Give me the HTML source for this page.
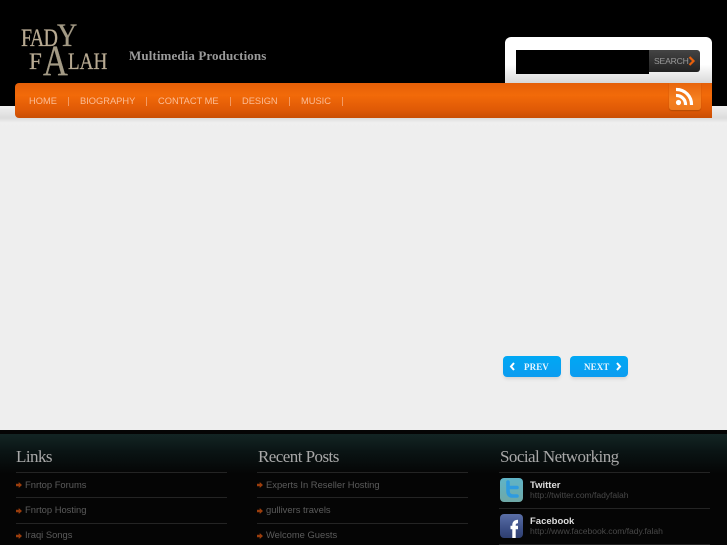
<!DOCTYPE html>
<html><head><meta charset="utf-8"><style>
html,body{margin:0;padding:0}
body{width:727px;height:545px;overflow:hidden;position:relative;background:#eeeeee;font-family:"Liberation Sans",sans-serif}
div,span,a{position:absolute;white-space:nowrap}
.nav{font-size:9.3px;color:#fbbd97;top:95px;line-height:12px}
.sep{width:1px;height:9px;background:#f39a63;top:97px}
.h{font-family:"Liberation Serif",serif;font-size:17px;color:#a8a8a8;top:447px;line-height:20px;letter-spacing:-.55px}
.ln{height:1px;background:#242424;width:211px}
.it{font-size:9.4px;color:#5c5c5c;line-height:12px;letter-spacing:0}
.ar{width:6px;height:6px;background:#9a3d0c;clip-path:polygon(0 30%,45% 30%,45% 0,100% 50%,45% 100%,45% 70%,0 70%)}
.url{font-size:8.6px;color:#484848;line-height:12px;letter-spacing:-.05px}
.tt{font-size:9.5px;font-weight:bold;line-height:12px;color:#ddd;letter-spacing:0}
.btn{top:356px;width:58px;height:21px;border-radius:4px;background:linear-gradient(#00a8f4,#0c9cf0);box-shadow:0 3px 3px -1px #d4d4d4}
.bt{font-family:"Liberation Serif",serif;font-weight:bold;font-size:9px;letter-spacing:.1px;color:#e8f6ff;line-height:12px}
.lg{font-family:"Liberation Serif",serif;transform-origin:left;-webkit-text-stroke:.3px currentColor}
</style></head><body>
<div style="left:0;top:0;width:727px;height:106px;background:#000"></div>
<div style="left:0;top:106px;width:727px;height:24px;background:linear-gradient(#f0f0f0,#dcdcdc 50%,#efefef 70%,#eee)"></div>

<span class="lg" style="left:21px;top:26px;font-size:25px;line-height:26px;color:#b8aa92;letter-spacing:-1px;transform:scaleX(.8)">FAD</span>
<span class="lg" style="left:57px;top:18px;font-size:33px;line-height:36px;color:#a39a85;transform:scaleX(.85)">Y</span>
<span class="lg" style="left:29px;top:49px;font-size:23px;line-height:26px;color:#b8aa92">F</span>
<span class="lg" style="left:43px;top:44px;font-size:43px;line-height:36px;color:#a39a85;transform:scaleX(.8)">A</span>
<span class="lg" style="left:68px;top:49px;font-size:23px;line-height:26px;color:#b8aa92;transform:scaleX(.83)">LAH</span>
<span style="left:129px;top:48px;font-family:'Liberation Serif',serif;font-weight:bold;font-size:13px;line-height:16px;color:#9a9a9a;letter-spacing:.1px">Multimedia Productions</span>

<div style="left:505px;top:37px;width:207px;height:46px;border-radius:6px 6px 0 0;background:linear-gradient(#fff,#fff 60%,#d8d8d8)"></div>
<div style="left:516px;top:50px;width:133px;height:24px;background:#000"></div>
<div style="left:649px;top:50px;width:51px;height:22px;border-radius:0 3px 3px 0;background:linear-gradient(#444,#222)"></div>
<span style="left:654px;top:55px;font-size:8.6px;line-height:12px;color:#999;letter-spacing:-.2px">SEARCH</span>
<svg style="position:absolute;left:688px;top:56px" width="8" height="10"><path d="M1.5 1L5.5 5L1.5 9" fill="none" stroke="#e8600c" stroke-width="2.2"/></svg>

<div style="left:15px;top:83px;width:697px;height:35px;border-radius:4px 0 0 4px;background:linear-gradient(#e45f08,#f26a09 35%,#e05a06 75%,#c94e04)"></div>
<span class="nav" style="left:29px">HOME</span><div class="sep" style="left:68px"></div>
<span class="nav" style="left:80px">BIOGRAPHY</span><div class="sep" style="left:146px"></div>
<span class="nav" style="left:158px">CONTACT ME</span><div class="sep" style="left:230px"></div>
<span class="nav" style="left:242px">DESIGN</span><div class="sep" style="left:289px"></div>
<span class="nav" style="left:301px">MUSIC</span><div class="sep" style="left:342px"></div>

<div style="left:669px;top:83px;width:32px;height:27px;border-radius:0 0 3px 3px;background:linear-gradient(#e8650c,#f58020 60%,#ee7a1e);box-shadow:0 1px 1px #b34a04"></div>
<svg style="position:absolute;left:675px;top:87px" width="20" height="19"><circle cx="3.5" cy="15.5" r="2.6" fill="#fff"/><path d="M1 8.5A9 9 0 0 1 10.5 18M1 2.5A15 15 0 0 1 16.5 18" fill="none" stroke="#fff" stroke-width="3.2"/></svg>

<div class="btn" style="left:503px"></div>
<svg style="position:absolute;left:509px;top:362px" width="7" height="9"><path d="M5 1L2 4.5L5 8" fill="none" stroke="#fff" stroke-width="2"/></svg>
<span class="bt" style="left:524px;top:361px">PREV</span>
<div class="btn" style="left:570px"></div>
<span class="bt" style="left:584px;top:361px">NEXT</span>
<svg style="position:absolute;left:615px;top:362px" width="7" height="9"><path d="M2 1L5 4.5L2 8" fill="none" stroke="#fff" stroke-width="2"/></svg>

<div style="left:0;top:430px;width:727px;height:115px;background:#050505"></div>
<div style="left:0;top:434px;width:727px;height:40px;background:linear-gradient(#132524,#0a1414 45%,#050505)"></div>

<span class="h" style="left:16px">Links</span>
<div class="ln" style="left:16px;top:472px"></div>
<div class="ar" style="left:16px;top:482px"></div><span class="it" style="left:25px;top:479px">Fnrtop Forums</span>
<div class="ln" style="left:16px;top:497px"></div>
<div class="ar" style="left:16px;top:508px"></div><span class="it" style="left:25px;top:504px">Fnrtop Hosting</span>
<div class="ln" style="left:16px;top:523px"></div>
<div class="ar" style="left:16px;top:533px"></div><span class="it" style="left:25px;top:529px">Iraqi Songs</span>

<span class="h" style="left:258px">Recent Posts</span>
<div class="ln" style="left:257px;top:472px"></div>
<div class="ar" style="left:257px;top:482px"></div><span class="it" style="left:266px;top:479px">Experts In Reseller Hosting</span>
<div class="ln" style="left:257px;top:497px"></div>
<div class="ar" style="left:257px;top:508px"></div><span class="it" style="left:266px;top:504px">gullivers travels</span>
<div class="ln" style="left:257px;top:523px"></div>
<div class="ar" style="left:257px;top:533px"></div><span class="it" style="left:266px;top:529px">Welcome Guests</span>

<span class="h" style="left:500px">Social Networking</span>
<div class="ln" style="left:499px;top:472px"></div>
<div style="left:500px;top:478px;width:23px;height:24px;border-radius:4px;background:linear-gradient(#5fb4c8,#6fa8a6)"></div>
<svg style="position:absolute;left:500px;top:478px" width="23" height="24"><path d="M8 4V13Q8 18 13 18H17M8 9.5H17" fill="none" stroke="#2f9be0" stroke-width="3.6" stroke-linecap="round"/></svg>
<span class="tt" style="left:530px;top:480px">Twitter</span>
<span class="url" style="left:530px;top:489px">http://twitter.com/fadyfalah</span>
<div class="ln" style="left:499px;top:508px"></div>
<div style="left:500px;top:514px;width:23px;height:24px;border-radius:4px;background:linear-gradient(#5a6ea6,#3c4f86 60%,#2f3f70)"></div>
<svg style="position:absolute;left:500px;top:514px" width="23" height="24"><path d="M14 24V11Q14 7.5 18 7.5M10.5 13.5H18" fill="none" stroke="#fff" stroke-width="3.4"/></svg>
<span class="tt" style="left:530px;top:516px">Facebook</span>
<span class="url" style="left:530px;top:525px">http://www.facebook.com/fady.falah</span>
<div class="ln" style="left:499px;top:544px"></div>
</body></html>
